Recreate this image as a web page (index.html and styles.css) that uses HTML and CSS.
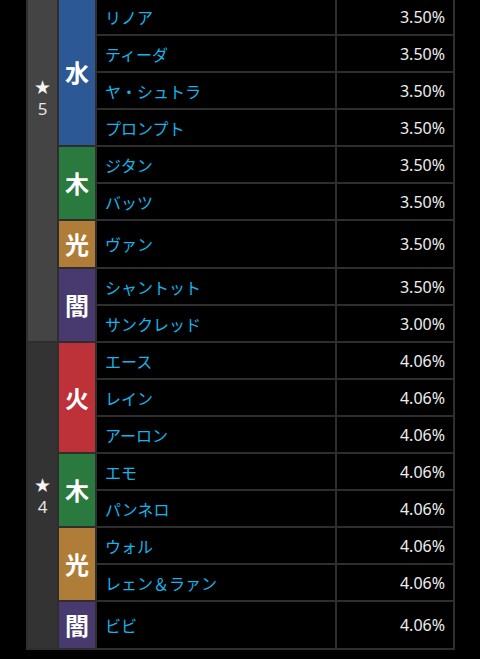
FILE: index.html
```html
<!DOCTYPE html>
<html lang="ja">
<head>
<meta charset="utf-8">
<title>排出率</title>
<link rel="stylesheet" href="styles.css">
</head>
<body>
<table class="rates">
  <colgroup>
    <col class="c-star">
    <col class="c-el">
    <col class="c-name">
    <col class="c-pct">
  </colgroup>
  <tbody>
    <tr>
      <td class="star star5 star-clipped" rowspan="9"><span class="star-mark">★</span><span class="star-num">5</span></td>
      <td class="el water" rowspan="4">水</td>
      <td class="name">リノア</td><td class="pct">3.50%</td>
    </tr>
    <tr><td class="name">ティーダ</td><td class="pct">3.50%</td></tr>
    <tr><td class="name">ヤ・シュトラ</td><td class="pct">3.50%</td></tr>
    <tr><td class="name">プロンプト</td><td class="pct">3.50%</td></tr>
    <tr>
      <td class="el wood" rowspan="2">木</td>
      <td class="name">ジタン</td><td class="pct">3.50%</td>
    </tr>
    <tr><td class="name">バッツ</td><td class="pct">3.50%</td></tr>
    <tr>
      <td class="el light">光</td>
      <td class="name">ヴァン</td><td class="pct">3.50%</td>
    </tr>
    <tr>
      <td class="el dark" rowspan="2">闇</td>
      <td class="name">シャントット</td><td class="pct">3.50%</td>
    </tr>
    <tr><td class="name">サンクレッド</td><td class="pct">3.00%</td></tr>

    <tr>
      <td class="star star4" rowspan="8"><span class="star-mark">★</span><span class="star-num">4</span></td>
      <td class="el fire" rowspan="3">火</td>
      <td class="name">エース</td><td class="pct">4.06%</td>
    </tr>
    <tr><td class="name">レイン</td><td class="pct">4.06%</td></tr>
    <tr><td class="name">アーロン</td><td class="pct">4.06%</td></tr>
    <tr>
      <td class="el wood" rowspan="2">木</td>
      <td class="name">エモ</td><td class="pct">4.06%</td>
    </tr>
    <tr><td class="name">パンネロ</td><td class="pct">4.06%</td></tr>
    <tr>
      <td class="el light" rowspan="2">光</td>
      <td class="name">ウォル</td><td class="pct">4.06%</td>
    </tr>
    <tr><td class="name">レェン＆ラァン</td><td class="pct">4.06%</td></tr>
    <tr>
      <td class="el dark">闇</td>
      <td class="name">ビビ</td><td class="pct">4.06%</td>
    </tr>
  </tbody>
</table>
</body>
</html>
```
FILE: styles.css
```css
html, body {
  margin: 0;
  padding: 0;
  background: #000;
}

body {
  font-family: "Noto Sans", "Noto Sans CJK JP", sans-serif;
  font-size: 16px;
}

.rates {
  border-collapse: collapse;
  table-layout: fixed;
  width: 427px;
  margin: -3px 0 0 26px;
}

.c-star { width: 31px; }
.c-el { width: 38px; }
.c-name { width: 240px; }
.c-pct { width: 118px; }

.rates td {
  border: 2px solid #2e2e2e;
  padding: 0;
  height: 35px;
  vertical-align: middle;
}

.star {
  text-align: center;
  color: #e4e4e4;
}

.star5 { background: #444444; }
.star4 { background: #333333; }

.rates .star-clipped {
  vertical-align: top;
  padding-top: 77px;
}

.star-mark {
  display: block;
  color: #f4f4f4;
  font-family: "DejaVu Sans", sans-serif;
  font-size: 19px;
  line-height: 22px;
}

.star-num {
  display: block;
  font-family: "Noto Sans", sans-serif;
  font-size: 17px;
  line-height: 22px;
}

.rates .el {
  text-align: center;
  color: #fff;
  font-family: "Noto Sans CJK JP", sans-serif;
  font-weight: 700;
  font-size: 24px;
  line-height: 28px;
  height: 28px;
  padding: 9px 0;
}

.water { background: #2c5996; }
.wood { background: #2a793e; }
.light { background: #b07d38; }
.dark { background: #483a6e; }
.fire { background: #bd3238; }

.rates .name {
  color: #16b4ea;
  font-family: "Noto Sans CJK JP", sans-serif;
  font-size: 16px;
  padding-left: 8px;
  white-space: nowrap;
}

.rates .pct {
  color: #eeeeee;
  text-align: right;
  font-family: "Noto Sans", sans-serif;
  font-size: 16px;
  padding-right: 8px;
}
```
